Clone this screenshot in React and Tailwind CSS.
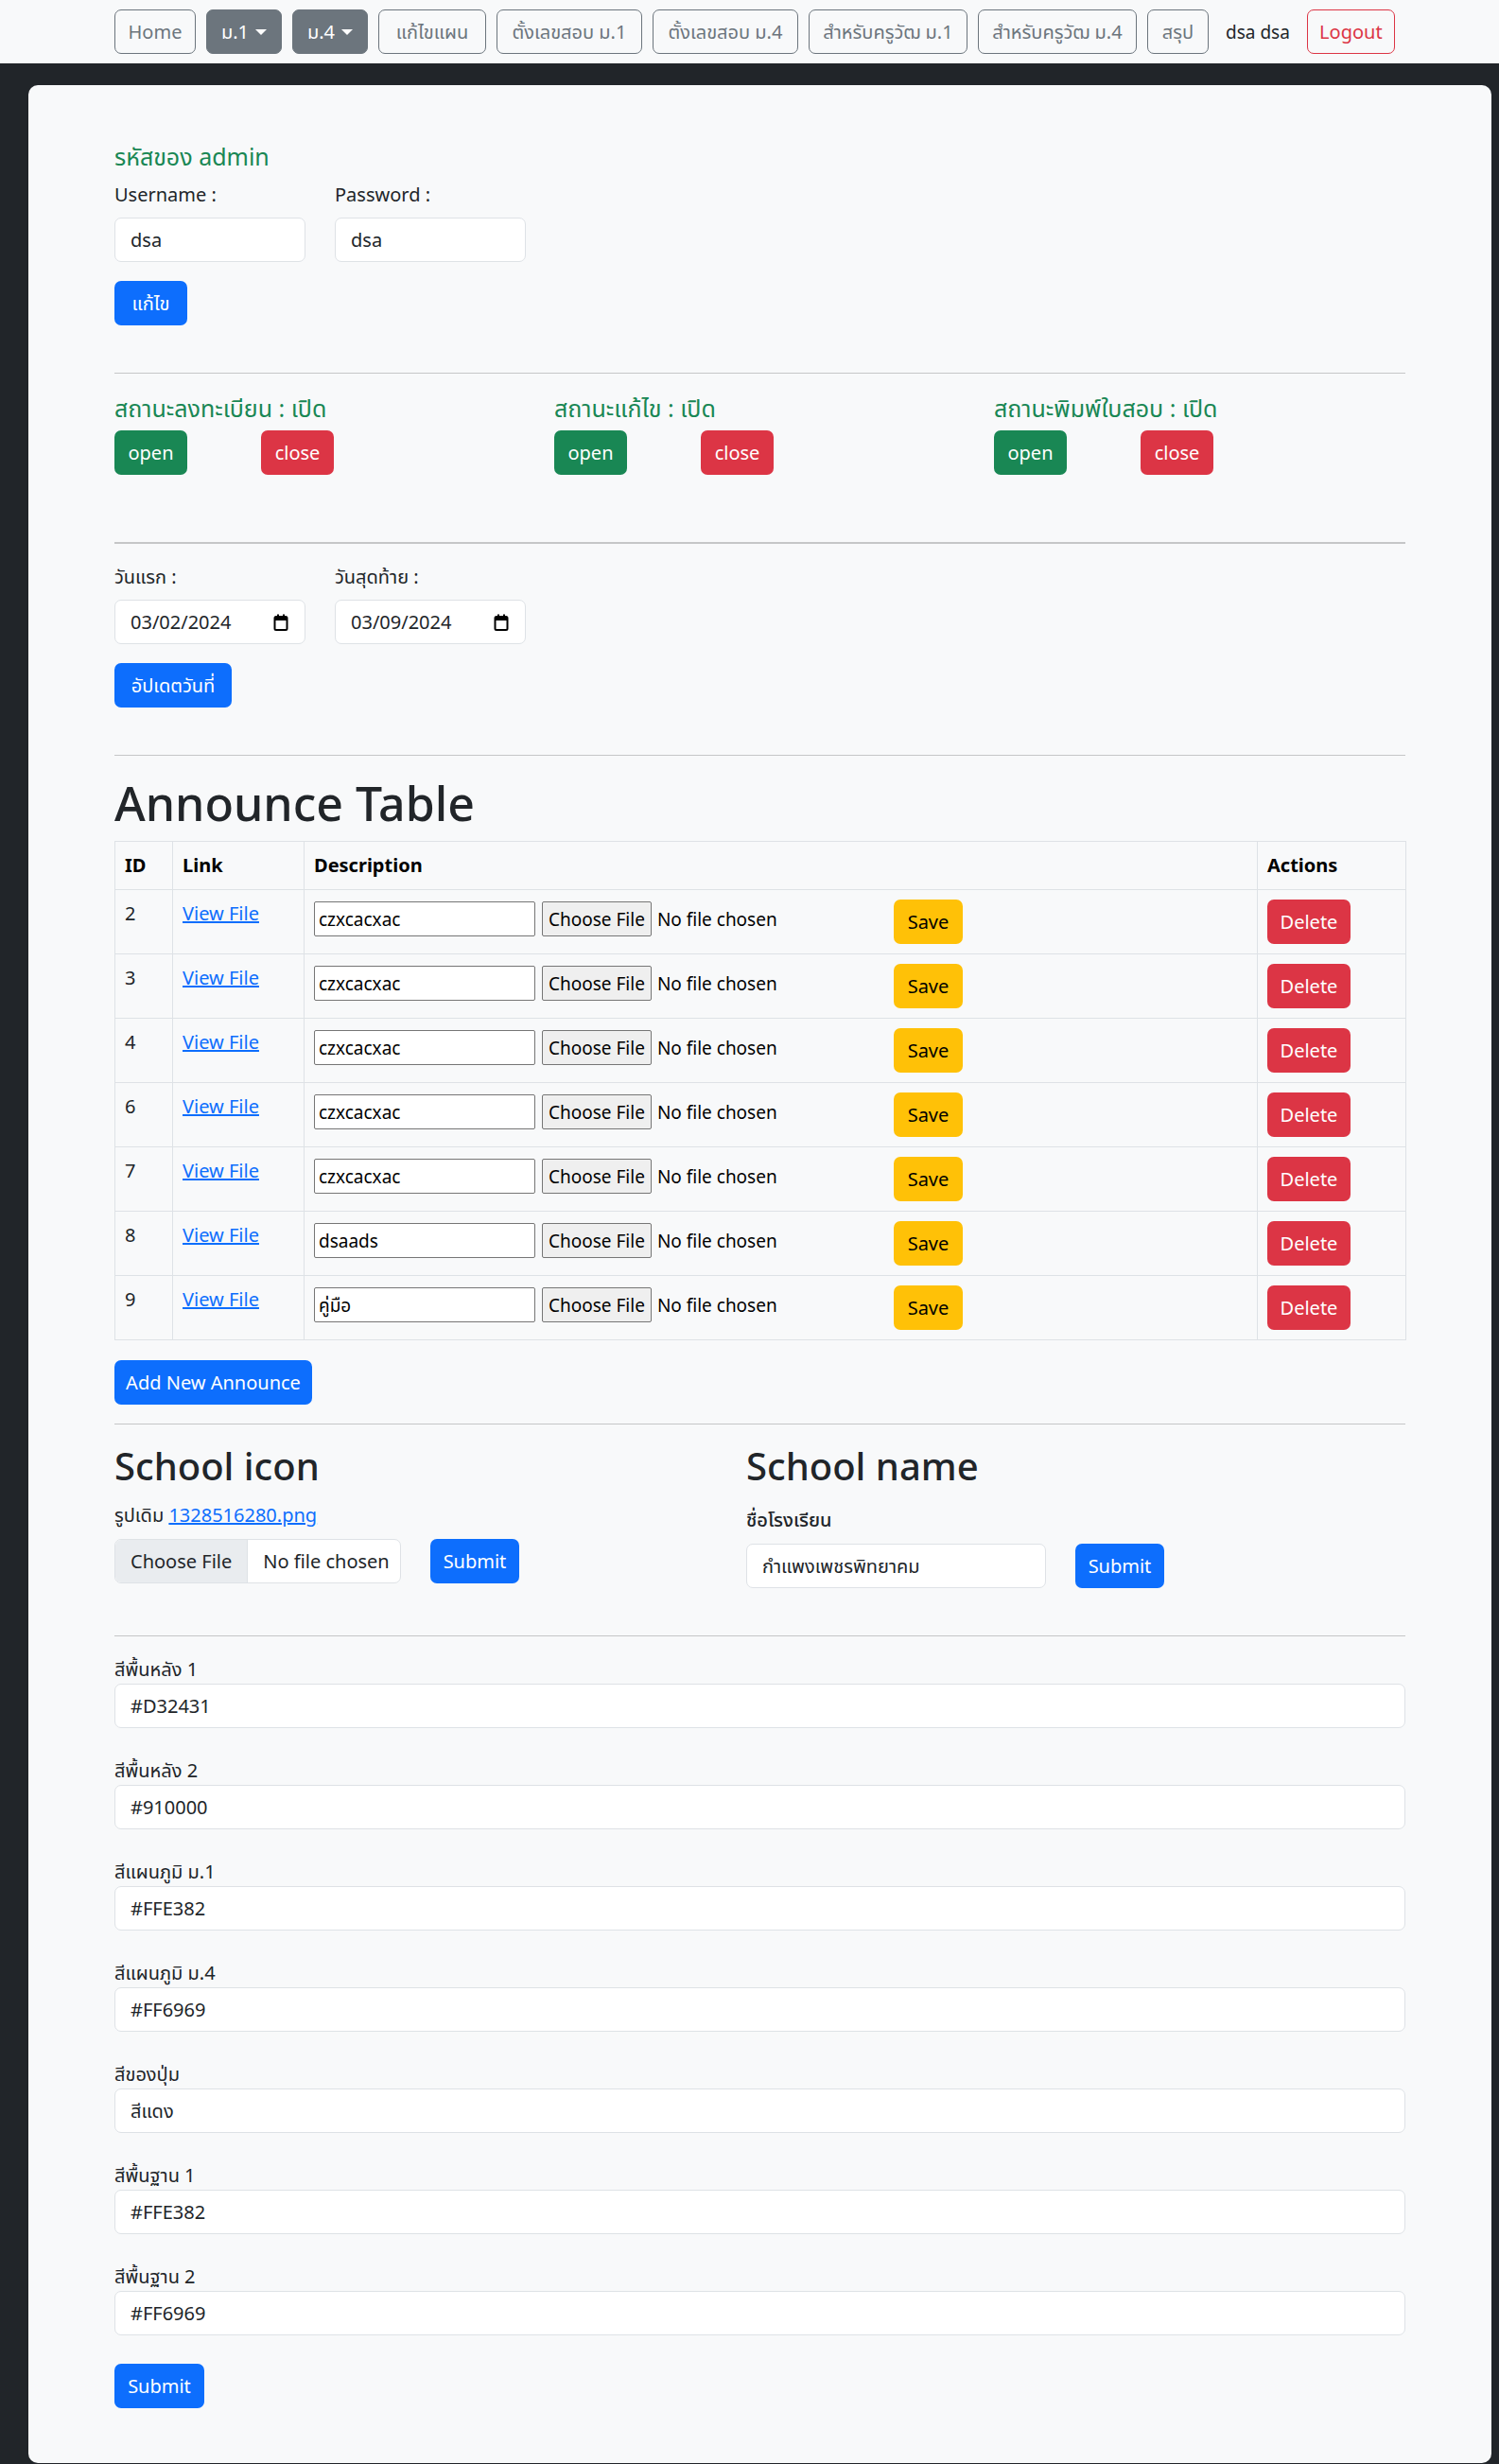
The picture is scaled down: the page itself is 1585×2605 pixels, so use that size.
import React from "react";

const FONT = "font-['Noto_Sans','Noto_Sans_Thai','Loma','Tlwg_Typo','DejaVu_Sans',sans-serif]";

const NAV_ITEMS = [
  { label: "Home", w: "w-[86px]" },
  { label: "ม.1", w: "w-[80px]", dropdown: true },
  { label: "ม.4", w: "w-[80px]", dropdown: true },
  { label: "แก้ไขแผน", w: "w-[114px]" },
  { label: "ตั้งเลขสอบ ม.1", w: "w-[154px]" },
  { label: "ตั้งเลขสอบ ม.4", w: "w-[154px]" },
  { label: "สำหรับครูวัฒ ม.1", w: "w-[168px]" },
  { label: "สำหรับครูวัฒ ม.4", w: "w-[168px]" },
  { label: "สรุป", w: "w-[65px]" },
];

const STATUS = ["สถานะลงทะเบียน : เปิด", "สถานะแก้ไข : เปิด", "สถานะพิมพ์ใบสอบ : เปิด"];

const ANNOUNCES = [
  { id: 2, desc: "czxcacxac" },
  { id: 3, desc: "czxcacxac" },
  { id: 4, desc: "czxcacxac" },
  { id: 6, desc: "czxcacxac" },
  { id: 7, desc: "czxcacxac" },
  { id: 8, desc: "dsaads" },
  { id: 9, desc: "คู่มือ" },
];

const COLORS = [
  ["สีพื้นหลัง 1", "#D32431"],
  ["สีพื้นหลัง 2", "#910000"],
  ["สีแผนภูมิ ม.1", "#FFE382"],
  ["สีแผนภูมิ ม.4", "#FF6969"],
  ["สีของปุ่ม", "สีแดง"],
  ["สีพื้นฐาน 1", "#FFE382"],
  ["สีพื้นฐาน 2", "#FF6969"],
];

const Btn = ({ children, className = "" }) => (
  <button
    className={`h-[47px] px-[12px] rounded-[7px] text-[20px] leading-[30px] whitespace-nowrap flex items-center justify-center shrink-0 ${className}`}
  >
    {children}
  </button>
);

const BoxInput = ({ value, className = "" }) => (
  <div
    className={`h-[47px] px-[16px] flex items-center bg-white border border-[#dee2e6] rounded-[7px] text-[20px] text-[#212529] ${className}`}
  >
    {value}
  </div>
);

const CalendarIcon = () => (
  <svg width="16" height="18" viewBox="0 0 16 18">
    <rect x="1.5" y="3" width="13" height="14" rx="1.5" fill="none" stroke="#000" strokeWidth="2" />
    <rect x="1.5" y="3" width="13" height="4" fill="#000" />
    <rect x="4" y="0.5" width="2" height="4" fill="#000" />
    <rect x="10" y="0.5" width="2" height="4" fill="#000" />
  </svg>
);

const DateInput = ({ value }) => (
  <div className="w-[202px] h-[47px] pl-[16px] pr-[17px] flex items-center justify-between bg-white border border-[#dee2e6] rounded-[7px] text-[20px] text-[#212529]">
    <span>{value}</span>
    <CalendarIcon />
  </div>
);

const Hr = ({ className = "" }) => <div className={`border-t border-[#c5c6c7] ${className}`} />;

export default function App() {
  return (
    <div className={`min-h-[2605px] bg-[#212529] text-[#212529] text-[20px] leading-[30px] ${FONT}`}>
      {/* Navbar */}
      <nav className="h-[67px] bg-[#f8f9fa] flex items-center gap-[11px] pl-[121px] text-[19px]">
        {NAV_ITEMS.map((item) =>
          item.dropdown ? (
            <Btn key={item.label} className={`${item.w} bg-[#6c757d] border border-[#6c757d] text-white gap-[7px] text-[19px]`}>
              {item.label}
              <span className="border-t-[6px] border-x-[6px] border-t-white border-x-transparent mt-[1px]" />
            </Btn>
          ) : (
            <Btn key={item.label} className={`${item.w} border border-[#6c757d] text-[#6c757d] text-[19px] px-[8px]`}>
              {item.label}
            </Btn>
          )
        )}
        <span className="mx-[7px] text-[#212529] whitespace-nowrap">dsa dsa</span>
        <Btn className="w-[93px] border border-[#dc3545] text-[#dc3545] text-[19px]">Logout</Btn>
      </nav>

      {/* Card */}
      <div className="mt-[23px] ml-[30px] mr-[8px] mb-[2px] bg-[#f8f9fa] rounded-[10px] pl-[91px] pr-[91px] pt-[60px] pb-[58px]">
        {/* Admin credentials */}
        <h5 className="text-[25px] leading-[30px] text-[#198754] mb-[11px]">รหัสของ admin</h5>
        <div className="flex gap-[31px]">
          <div>
            <label className="block mb-[9px]">Username :</label>
            <BoxInput value="dsa" className="w-[202px]" />
          </div>
          <div>
            <label className="block mb-[9px]">Password :</label>
            <BoxInput value="dsa" className="w-[202px]" />
          </div>
        </div>
        <Btn className="mt-[20px] w-[77px] bg-[#0d6efd] text-white">แก้ไข</Btn>

        <Hr className="mt-[50px]" />

        {/* Status */}
        <div className="flex mt-[21px]">
          {STATUS.map((s) => (
            <div key={s} className="w-[465px] shrink-0">
              <h5 className="text-[25px] leading-[30px] text-[#198754]">{s}</h5>
              <div className="flex gap-[78px] mt-[9px]">
                <Btn className="w-[77px] bg-[#198754] text-white">open</Btn>
                <Btn className="w-[77px] bg-[#dc3545] text-white">close</Btn>
              </div>
            </div>
          ))}
        </div>

        <Hr className="mt-[71px] border-t-2" />

        {/* Dates */}
        <div className="flex gap-[31px] mt-[20px]">
          <div>
            <label className="block mb-[9px]">วันแรก :</label>
            <DateInput value="03/02/2024" />
          </div>
          <div>
            <label className="block mb-[9px]">วันสุดท้าย :</label>
            <DateInput value="03/09/2024" />
          </div>
        </div>
        <Btn className="mt-[20px] w-[124px] bg-[#0d6efd] text-white">อัปเดตวันที่</Btn>

        <Hr className="mt-[50px]" />

        {/* Announce table */}
        <h1 className="mt-[20px] mb-[10px] text-[50px] leading-[60px] font-medium">Announce Table</h1>
        <table className="w-[1365px] table-fixed border-collapse">
          <colgroup>
            <col className="w-[61px]" />
            <col className="w-[139px]" />
            <col className="w-[1008px]" />
            <col className="w-[157px]" />
          </colgroup>
          <thead>
            <tr>
              {["ID", "Link", "Description", "Actions"].map((h) => (
                <th key={h} className="border border-[#dee2e6] p-[10px] text-left font-bold text-black align-top">
                  {h}
                </th>
              ))}
            </tr>
          </thead>
          <tbody>
            {ANNOUNCES.map((a) => (
              <tr key={a.id}>
                <td className="border border-[#dee2e6] p-[10px] align-top">{a.id}</td>
                <td className="border border-[#dee2e6] p-[10px] align-top">
                  <a href="#" className="text-[#0d6efd] underline">View File</a>
                </td>
                <td className="border border-[#dee2e6] p-[10px] align-top">
                  <div className="flex items-center h-[47px]">
                    <div className="w-[234px] h-[37px] mb-[6px] border border-[#767676] rounded-[2px] bg-white px-[4px] flex items-center text-[19px] text-black">
                      {a.desc}
                    </div>
                    <div className="w-[367px] ml-[7px] mb-[6px] flex items-center">
                      <span className="h-[37px] px-[6px] border border-[#767676] rounded-[2px] bg-[#efefef] flex items-center text-[19px] text-black">
                        Choose File
                      </span>
                      <span className="ml-[6px] text-[19px] text-black">No file chosen</span>
                    </div>
                    <Btn className="ml-[5px] w-[73px] bg-[#ffc107] text-black">Save</Btn>
                  </div>
                </td>
                <td className="border border-[#dee2e6] p-[10px] align-top">
                  <Btn className="w-[88px] bg-[#dc3545] text-white">Delete</Btn>
                </td>
              </tr>
            ))}
          </tbody>
        </table>
        <Btn className="mt-[21px] w-[209px] bg-[#0d6efd] text-white">Add New Announce</Btn>

        <Hr className="mt-[20px]" />

        {/* School icon / name */}
        <div className="flex mt-[20px]">
          <div className="w-[668px]">
            <h2 className="text-[40px] leading-[48px] font-medium">School icon</h2>
            <p className="mt-[13px]">
              รูปเดิม <a href="#" className="text-[#0d6efd] underline">1328516280.png</a>
            </p>
            <div className="flex gap-[31px] mt-[10px]">
              <div className="w-[303px] h-[47px] flex items-center bg-white border border-[#dee2e6] rounded-[7px] overflow-hidden">
                <span className="h-full px-[16px] flex items-center bg-[#e9ecef] border-r border-[#dee2e6]">Choose File</span>
                <span className="ml-[16px] whitespace-nowrap">No file chosen</span>
              </div>
              <Btn className="w-[94px] bg-[#0d6efd] text-white">Submit</Btn>
            </div>
          </div>
          <div>
            <h2 className="text-[40px] leading-[48px] font-medium">School name</h2>
            <label className="block mt-[18px] mb-[10px] font-medium">ชื่อโรงเรียน</label>
            <div className="flex gap-[31px]">
              <BoxInput value="กำแพงเพชรพิทยาคม" className="w-[317px]" />
              <Btn className="w-[94px] bg-[#0d6efd] text-white">Submit</Btn>
            </div>
          </div>
        </div>

        <Hr className="mt-[50px]" />

        {/* Colours */}
        <div className="mt-[20px]">
          {COLORS.map(([label, value]) => (
            <div key={label} className="mb-[30px]">
              <label className="block">{label}</label>
              <BoxInput value={value} className="w-full" />
            </div>
          ))}
        </div>
        <Btn className="w-[95px] bg-[#0d6efd] text-white">Submit</Btn>
      </div>
    </div>
  );
}
